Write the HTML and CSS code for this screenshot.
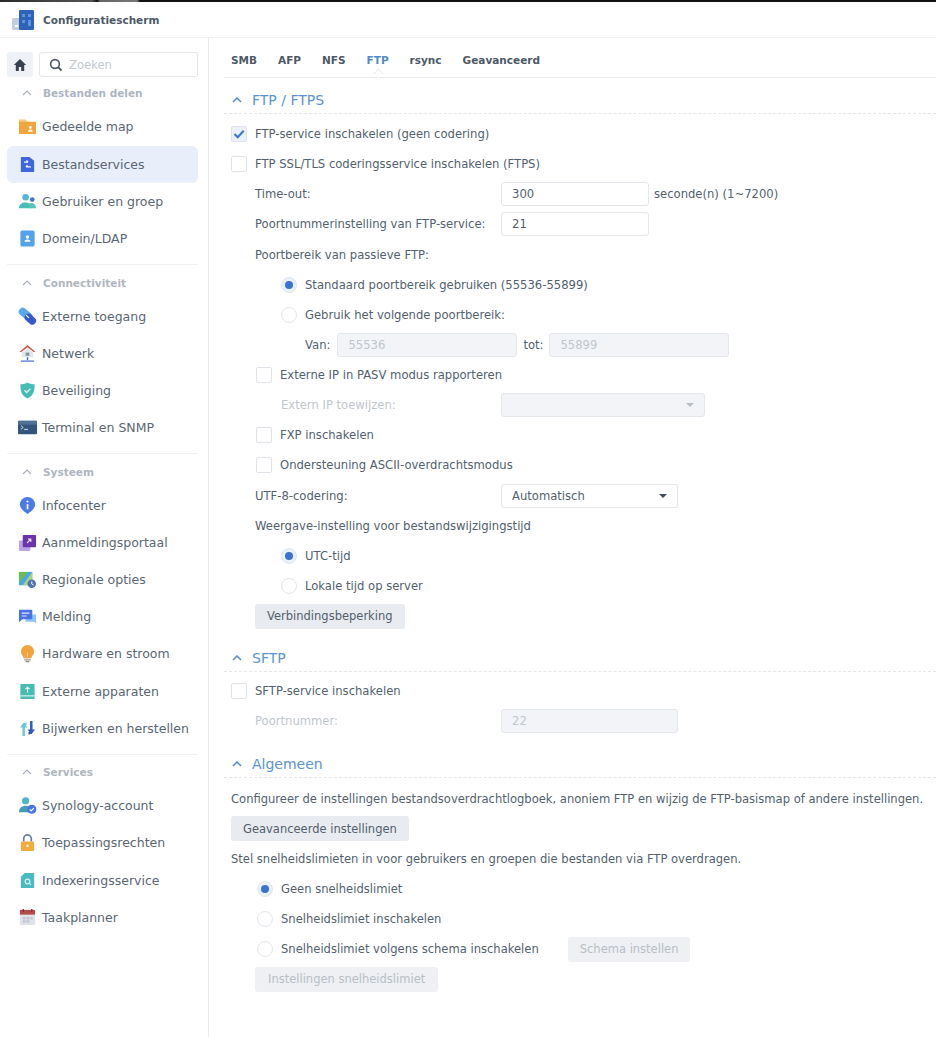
FILE: index.html
```html
<!DOCTYPE html>
<html lang="nl">
<head>
<meta charset="UTF-8" />
<title>Configuratiescherm</title>
<link rel="stylesheet" href="styles.css">
</head>
<body>

<div class="top-strip"></div>

<header class="title-bar">
  <svg class="app-icon" viewBox="0 0 22 22">
    <rect x="0" y="9" width="9" height="12" rx="1" fill="#c4cfde"/>
    <rect x="7" y="1" width="15" height="20" rx="1" fill="#2f63b8"/>
    <path d="M10 5h3v3h-3zM16 5h3v3h-3zM10 11h3v3h-3zM16 11h3v6h-3z" fill="#5f93dc"/>
    <rect x="3" y="16" width="3" height="2" fill="#fff"/>
  </svg>
  <span>Configuratiescherm</span>
</header>

<div class="layout">
  <aside class="sidebar">
    <div class="search-row">
      <button class="home-btn">
        <svg viewBox="0 0 14 14" width="14" height="14"><path d="M7 1 .8 7h2v6h3V9h2.400v4h3V7h2z" fill="#38424e"/></svg>
      </button>
      <div class="search-box">
        <svg viewBox="0 0 14 14" width="14" height="14"><circle cx="6" cy="6" r="4.400" fill="none" stroke="#4a5663" stroke-width="1.600"/><path d="m9.200 9.200 3.300 3.300" stroke="#4a5663" stroke-width="1.800"/></svg>
        <span>Zoeken</span>
      </div>
    </div>

    <div class="nav-heading first">
      <svg class="chev" viewBox="0 0 10 6"><path d="M1 5l4-4 4 4" fill="none" stroke="#a9b2bc" stroke-width="1.200"/></svg>Bestanden delen
    </div>
    <div class="nav-item">
      <svg viewBox="0 0 20 20"><path d="M1 3h7l2 2h9v13H1z" fill="#f0a63c"/><path d="M1 3h7l2 2H1z" fill="#f7c980"/><circle cx="13" cy="11" r="1.500" fill="#fff"/><path d="M10.500 15.500c0-3 5-3 5 0z" fill="#fff"/></svg>
      Gedeelde map
    </div>
    <div class="nav-item active">
      <svg viewBox="0 0 20 20"><path d="M3 2h9l5 4v12H3z" fill="#3f66dc"/><path d="M6.500 7.500h4M9 5.800l1.700 1.700M13.500 12.500h-5M10 10.800l-1.700 1.700" stroke="#fff" stroke-width="1.200" fill="none"/></svg>
      Bestandservices
    </div>
    <div class="nav-item">
      <svg viewBox="0 0 20 20"><circle cx="8" cy="5.500" r="3.500" fill="#58b4d8"/><circle cx="15" cy="8" r="2.500" fill="#4a72d0"/><path d="M1 17c0-8 13-8 13 0z" fill="#47bdb4"/><path d="M12 17c0-2-.5-3.500-1.500-4.500 3-2 8.500-1 8.500 4.500z" fill="#5ac4c0"/></svg>
      Gebruiker en groep
    </div>
    <div class="nav-item">
      <svg viewBox="0 0 20 20"><rect x="2.500" y="1.500" width="15" height="17" rx="2" fill="#53a2ea"/><circle cx="10" cy="8.500" r="1.800" fill="#fff"/><path d="M6.800 13.500c0-3.400 6.400-3.400 6.400 0z" fill="#fff"/></svg>
      Domein/LDAP
    </div>

    <div class="nav-divider"></div>

    <div class="nav-heading">
      <svg class="chev" viewBox="0 0 10 6"><path d="M1 5l4-4 4 4" fill="none" stroke="#a9b2bc" stroke-width="1.200"/></svg>Connectiviteit
    </div>
    <div class="nav-item">
      <svg viewBox="0 0 20 20"><path d="M5 5l6 5" stroke="#5aa8ee" stroke-width="8.500" stroke-linecap="round"/><path d="M11 11l4 3.500" stroke="#3558cc" stroke-width="8" stroke-linecap="round"/><path d="M8.500 8.500l3 3" stroke="#fff" stroke-width="1.300"/></svg>
      Externe toegang
    </div>
    <div class="nav-item">
      <svg viewBox="0 0 20 20"><path d="M10 1 1.500 8.500h2L10 3.500l6.500 5h2z" fill="#c9574c"/><path d="M4 9l6-4.500L16 9v5H4z" fill="#e4e7ec"/><rect x="8" y="9" width="4" height="3.500" fill="#8b96a5"/><path d="M10 14v3" stroke="#3f66c8" stroke-width="1.500"/><path d="M3 18h14" stroke="#3f66c8" stroke-width="1.200"/></svg>
      Netwerk
    </div>
    <div class="nav-item">
      <svg viewBox="0 0 20 20"><path d="M10 1.500c3 1.700 5 2 7.500 2 0 7-1 12-7.500 15-6.500-3-7.500-8-7.500-15 2.500 0 4.500-.3 7.500-2z" fill="#46bcb4"/><path d="M6.800 9.800l2.300 2.300 4-4" fill="none" stroke="#dff5f3" stroke-width="1.400"/></svg>
      Beveiliging
    </div>
    <div class="nav-item">
      <svg viewBox="0 0 20 20"><rect y="3" width="20" height="14" rx="1" fill="#34557c"/><rect y="3" width="20" height="4" fill="#517096"/><path d="M3 8l2.500 2L3 12" fill="none" stroke="#dbe4ee" stroke-width="1"/><path d="M6.500 12h4" stroke="#dbe4ee" stroke-width="1"/></svg>
      Terminal en SNMP
    </div>

    <div class="nav-divider"></div>

    <div class="nav-heading">
      <svg class="chev" viewBox="0 0 10 6"><path d="M1 5l4-4 4 4" fill="none" stroke="#a9b2bc" stroke-width="1.200"/></svg>Systeem
    </div>
    <div class="nav-item">
      <svg viewBox="0 0 20 20"><path d="M10 1a8 8 0 0 1 8 8c0 4-4 7-8 10-4-3-8-6-8-10a8 8 0 0 1 8-8z" fill="#4a7ae6"/><circle cx="10" cy="5.800" r="1.100" fill="#fff"/><path d="M10 8.500v5.500" stroke="#fff" stroke-width="1.800"/></svg>
      Infocenter
    </div>
    <div class="nav-item">
      <svg viewBox="0 0 20 20"><rect x="1" y="8" width="12" height="11" rx="1" fill="#b9a2ea"/><rect x="5" y="2" width="14" height="13" rx="1" fill="#6a35a8"/><path d="M9.500 10.500l4-4M10.500 6.500h3v3" stroke="#e9def8" stroke-width="1.200" fill="none"/></svg>
      Aanmeldingsportaal
    </div>
    <div class="nav-item">
      <svg viewBox="0 0 20 20"><path d="M1 2h14v14H1z" fill="#4aa6e6"/><path d="M1 2h10L1 13z" fill="#6cbc52"/><path d="M15 2 5 16h5l5-6z" fill="#a6d676"/><circle cx="14.500" cy="14.500" r="4.500" fill="#4f72b8"/><path d="M14.500 12v2.800l2 1" stroke="#fff" stroke-width="1" fill="none"/></svg>
      Regionale opties
    </div>
    <div class="nav-item">
      <svg viewBox="0 0 20 20"><path d="M8 8h11v9l-2-1.500H8z" fill="#8cc4f4"/><path d="M1 3h14v10H4.500L1 16z" fill="#4a72e4"/><path d="M4 6.500h8M4 9.500h5" stroke="#dfe8fc" stroke-width="1.200"/></svg>
      Melding
    </div>
    <div class="nav-item">
      <svg viewBox="0 0 20 20"><path d="M10 1a7 7 0 0 1 7 7c0 3-2.500 4.500-3 7H6c-.5-2.500-3-4-3-7a7 7 0 0 1 7-7z" fill="#f3a43c"/><rect x="6.500" y="15.500" width="7" height="2" fill="#b8b4a8"/><rect x="8" y="17.800" width="4" height="1.400" fill="#8d8a80"/><path d="M10 9v5" stroke="#ffd9a0" stroke-width="1"/></svg>
      Hardware en stroom
    </div>
    <div class="nav-item">
      <svg viewBox="0 0 20 20"><rect x="2.500" y="2" width="15" height="16" rx="1" fill="#45bdb4"/><rect x="2.500" y="14" width="15" height="1.200" fill="#e4f6f4"/><path d="M10 11V5.500M7.800 7.500 10 5.300l2.200 2.200" stroke="#fff" stroke-width="1.200" fill="none"/></svg>
      Externe apparaten
    </div>
    <div class="nav-item">
      <svg viewBox="0 0 20 20"><path d="M6 18V8c0-2 1-3 3-3" fill="none" stroke="#6cc8d8" stroke-width="2.600"/><path d="M2 9l4-5 4 5z" fill="#6cc8d8"/><path d="M14 2v10c0 2-1 3-3 3" fill="none" stroke="#2f58c0" stroke-width="2.600"/><path d="M10 11l4 5 4-5z" fill="#2f58c0"/></svg>
      Bijwerken en herstellen
    </div>

    <div class="nav-divider"></div>

    <div class="nav-heading">
      <svg class="chev" viewBox="0 0 10 6"><path d="M1 5l4-4 4 4" fill="none" stroke="#a9b2bc" stroke-width="1.200"/></svg>Services
    </div>
    <div class="nav-item">
      <svg viewBox="0 0 20 20"><circle cx="8" cy="5" r="3.800" fill="#4cb6c4"/><path d="M1 17c0-9 14-9 14 0z" fill="#3f9db4"/><circle cx="14.500" cy="14" r="4.800" fill="#4a72e4"/><path d="M12.300 14l1.600 1.600 2.800-2.900" stroke="#fff" stroke-width="1.200" fill="none"/></svg>
      Synology-account
    </div>
    <div class="nav-item">
      <svg viewBox="0 0 20 20"><path d="M6 9V6a4 4 0 0 1 8 0v3" fill="none" stroke="#6a7fa0" stroke-width="1.800"/><rect x="3" y="9" width="14" height="10" rx="1.500" fill="#f0ac3c"/><circle cx="10" cy="13.500" r="1.400" fill="#fff3d8"/></svg>
      Toepassingsrechten
    </div>
    <div class="nav-item">
      <svg viewBox="0 0 20 20"><path d="M7 2h10v16H3V6z" fill="#4abcc0"/><circle cx="10" cy="11" r="2.500" fill="none" stroke="#d8f3f3" stroke-width="1.200"/><path d="M12 13l1.500 1.500" stroke="#d8f3f3" stroke-width="1.200"/></svg>
      Indexeringsservice
    </div>
    <div class="nav-item">
      <svg viewBox="0 0 20 20"><rect x="2" y="2" width="16" height="16" rx="1" fill="#dfe2e8"/><path d="M2 2h16v5H2z" fill="#b54a4a"/><path d="M5.500 1v3M14.500 1v3" stroke="#7d3232" stroke-width="1.500"/><path d="M5 9.500h3v2.500H5zM9 9.500h3v2.500H9zM13 9.500h2.500v2.500H13zM5 13h3v2.500H5zM9 13h3v2.500H9z" fill="#c1c6cf"/></svg>
      Taakplanner
    </div>
  </aside>

  <main class="content">
    <nav class="tabs">
      <span class="tab">SMB</span>
      <span class="tab">AFP</span>
      <span class="tab">NFS</span>
      <span class="tab active">FTP</span>
      <span class="tab">rsync</span>
      <span class="tab">Geavanceerd</span>
    </nav>

    <h2 class="section-title first">
      <svg class="chev" viewBox="0 0 10 6"><path d="M1 5l4-4 4 4" fill="none" stroke="#4f8bcb" stroke-width="1.500"/></svg>FTP / FTPS
    </h2>
    <div class="section-body ftp">
      <div class="row">
        <span class="check checked"><svg viewBox="0 0 14 14"><path d="M2.500 7l3.200 3.200 6-6.500" fill="none" stroke="#3a72d0" stroke-width="2"/></svg></span>
        FTP-service inschakelen (geen codering)
      </div>
      <div class="row"><span class="check"></span>FTP SSL/TLS coderingsservice inschakelen (FTPS)</div>
      <div class="row indent">
        <label class="field-label">Time-out:</label>
        <div class="input w148">300</div>
        <span class="suffix">seconde(n) (1~7200)</span>
      </div>
      <div class="row indent">
        <label class="field-label">Poortnummerinstelling van FTP-service:</label>
        <div class="input w148">21</div>
      </div>
      <div class="row indent">Poortbereik van passieve FTP:</div>
      <div class="row indent2"><span class="radio on"></span>Standaard poortbereik gebruiken (55536-55899)</div>
      <div class="row indent2"><span class="radio"></span>Gebruik het volgende poortbereik:</div>
      <div class="row range">
        <span class="range-from">Van:</span>
        <div class="input disabled w180">55536</div>
        <span>tot:</span>
        <div class="input disabled w180">55899</div>
      </div>
      <div class="row indent"><span class="check"></span>Externe IP in PASV modus rapporteren</div>
      <div class="row indent3">
        <label class="field-label muted">Extern IP toewijzen:</label>
        <div class="input disabled select w204"><span class="caret light"></span></div>
      </div>
      <div class="row indent"><span class="check"></span>FXP inschakelen</div>
      <div class="row indent"><span class="check"></span>Ondersteuning ASCII-overdrachtsmodus</div>
      <div class="row indent">
        <label class="field-label">UTF-8-codering:</label>
        <div class="input select w177">Automatisch<span class="caret"></span></div>
      </div>
      <div class="row indent">Weergave-instelling voor bestandswijzigingstijd</div>
      <div class="row indent2"><span class="radio on"></span>UTC-tijd</div>
      <div class="row indent2"><span class="radio"></span>Lokale tijd op server</div>
      <div class="row indent"><button class="btn">Verbindingsbeperking</button></div>
    </div>

    <h2 class="section-title">
      <svg class="chev" viewBox="0 0 10 6"><path d="M1 5l4-4 4 4" fill="none" stroke="#4f8bcb" stroke-width="1.500"/></svg>SFTP
    </h2>
    <div class="section-body sftp">
      <div class="row"><span class="check"></span>SFTP-service inschakelen</div>
      <div class="row indent">
        <label class="field-label muted">Poortnummer:</label>
        <div class="input disabled w177">22</div>
      </div>
    </div>

    <h2 class="section-title">
      <svg class="chev" viewBox="0 0 10 6"><path d="M1 5l4-4 4 4" fill="none" stroke="#4f8bcb" stroke-width="1.500"/></svg>Algemeen
    </h2>
    <div class="section-body general">
      <div class="row">Configureer de instellingen bestandsoverdrachtlogboek, anoniem FTP en wijzig de FTP-basismap of andere instellingen.</div>
      <div class="row"><button class="btn">Geavanceerde instellingen</button></div>
      <div class="row">Stel snelheidslimieten in voor gebruikers en groepen die bestanden via FTP overdragen.</div>
      <div class="row indent1"><span class="radio on"></span>Geen snelheidslimiet</div>
      <div class="row indent1"><span class="radio"></span>Snelheidslimiet inschakelen</div>
      <div class="row indent1">
        <span class="radio"></span>Snelheidslimiet volgens schema inschakelen
        <button class="btn disabled push">Schema instellen</button>
      </div>
      <div class="row indent"><button class="btn disabled wide">Instellingen snelheidslimiet</button></div>
    </div>
  </main>
</div>

</body>
</html>
```

FILE: styles.css
```css
html, body {
  margin: 0;
  padding: 0;
  height: 1037px;
  overflow: hidden;
}
body {
  font-family: 'DejaVu Sans', sans-serif;
  font-size: 11.6px;
  color: #525f6d;
  background: #fff;
}
.top-strip {
  height: 2px;
  background: linear-gradient(90deg, #2b2b2b 0, #555 92px, #111 97px, #666 100px, #777 137px, #111 140px);
}
.title-bar {
  height: 35px;
  display: flex;
  align-items: center;
  gap: 9px;
  padding-left: 12px;
  font-size: 10.500px;
  font-weight: bold;
  color: #4d5966;
  border-bottom: 1px solid #eef0f3;
}
.app-icon {
  width: 22px;
  height: 22px;
}
.layout {
  display: flex;
  height: 999px;
}
.sidebar {
  width: 209px;
  flex: none;
  box-sizing: border-box;
  border-right: 1px solid #e8ebef;
  padding: 14px 10px 0 7px;
}
.search-row {
  display: flex;
  gap: 6px;
  height: 25px;
}
.home-btn {
  width: 26px;
  height: 25px;
  border: none;
  border-radius: 3px;
  background: #eef1f5;
  padding: 0;
  display: flex;
  align-items: center;
  justify-content: center;
}
.search-box {
  flex: 1;
  display: flex;
  align-items: center;
  gap: 6px;
  padding-left: 9px;
  border: 1px solid #e3e7ec;
  border-radius: 3px;
  color: #c3c9d0;
}
.nav-heading {
  height: 29.3px;
  display: flex;
  align-items: center;
  font-weight: bold;
  font-size: 10.500px;
  color: #aeb6bf;
  padding-left: 15px;
}
.nav-heading.first {
  height: 31.4px;
}
.nav-heading .chev {
  width: 10px;
  height: 6px;
  margin-right: 11px;
}
.nav-item {
  height: 37.2px;
  display: flex;
  align-items: center;
  gap: 5px;
  padding-left: 11px;
  border-radius: 6px;
  font-size: 12.500px;
  color: #5a6673;
}
.nav-item svg {
  width: 19px;
  height: 19px;
  flex: none;
}
.nav-item.active {
  background: #e8effb;
}
.nav-divider {
  height: 1px;
  background: #eef0f3;
  margin: 7px 0 3px;
}
.content {
  flex: 1;
  min-width: 0;
}
.tabs {
  height: 40px;
  box-sizing: border-box;
  display: flex;
  align-items: center;
  gap: 21px;
  margin-left: 15px;
  padding: 5px 0 0 7px;
  border-bottom: 1px solid #e8ebef;
  font-weight: bold;
  font-size: 10.500px;
  color: #4d5966;
}
.tab.active {
  color: #4f8bcb;
  position: relative;
}
/* little notch under the selected tab */
.tab.active::after {
  content: "";
  position: absolute;
  left: 50%;
  bottom: -11px;
  width: 6px;
  height: 6px;
  margin-left: -3px;
  background: #fff;
  border-left: 1px solid #e8ebef;
  border-top: 1px solid #e8ebef;
  transform: rotate(45deg);
}
.section-title {
  margin: 0 0 0 15px;
  height: 25px;
  display: flex;
  align-items: center;
  font-weight: normal;
  font-size: 14px;
  color: #5b93d0;
  padding-left: 8px;
  border-bottom: 1px dashed #e3e6ea;
}
.section-title.first {
  margin-top: 8px;
  height: 27px;
}
.section-title .chev {
  width: 10px;
  height: 6px;
  margin-right: 10px;
}
.section-body {
  padding: 5px 0 14px 22px;
}
.section-body.ftp {
  padding-bottom: 14.500px;
}
.section-body.sftp {
  padding-top: 4px;
  padding-bottom: 16px;
}
.section-body.general {
  padding-top: 5.500px;
  font-size: 11.550px;
}
.general .row:first-child {
  box-sizing: border-box;
  padding-top: 2px;
}
.row {
  height: 30.125px;
  display: flex;
  align-items: center;
  white-space: nowrap;
}
.indent {
  padding-left: 24px;
}
.indent1 {
  padding-left: 26px;
}
.indent2 {
  padding-left: 50px;
}
.indent3 {
  padding-left: 50px;
}
.range {
  padding-left: 74px;
  gap: 6px;
}
.range-from {
  margin-right: 1px;
}
.field-label {
  width: 246px;
  flex: none;
}
.indent3 .field-label {
  width: 220px;
}
.muted {
  color: #c0c6cd;
}
.check {
  width: 16px;
  height: 16px;
  box-sizing: border-box;
  border: 1px solid #dfe3e8;
  border-radius: 2px;
  margin-right: 8px;
  flex: none;
  display: flex;
}
.indent .check {
  margin-left: 1px;
}
.check svg {
  width: 14px;
  height: 14px;
}
.check.checked {
  background: #eaf1fb;
}
.radio {
  width: 16px;
  height: 16px;
  box-sizing: border-box;
  border: 1px solid #e2e6ea;
  border-radius: 50%;
  margin-right: 8px;
  flex: none;
  position: relative;
}
.radio.on {
  background: #eaf1fb;
}
.radio.on::after {
  content: "";
  position: absolute;
  left: 3px;
  top: 3px;
  width: 8px;
  height: 8px;
  border-radius: 50%;
  background: #3a72d0;
}
.input {
  height: 24px;
  box-sizing: border-box;
  border: 1px solid #e3e7ec;
  border-radius: 3px;
  padding: 0 10px;
  display: flex;
  align-items: center;
  flex: none;
}
.input.disabled {
  background: #f2f4f7;
  color: #c0c6cd;
}
.w148 { width: 148px; }
.w177 { width: 177px; }
.w180 { width: 180px; }
.w204 { width: 204px; }
.select {
  justify-content: space-between;
}
.select .caret {
  margin-left: auto;
}
.caret {
  width: 0;
  height: 0;
  border-left: 4px solid transparent;
  border-right: 4px solid transparent;
  border-top: 4px solid #414c58;
}
.caret.light {
  border-top-color: #b8bfc7;
}
.suffix {
  margin-left: 5px;
}
.btn {
  height: 25px;
  padding: 0 12px;
  border: none;
  border-radius: 3px;
  background: #e8ebef;
  font-family: inherit;
  font-size: 11.500px;
  color: #525f6d;
}
.btn.disabled {
  background: #eef0f3;
  color: #b8bfc7;
}
.btn.wide {
  padding: 0 13px;
}
.btn.push {
  margin-left: 29px;
}
```
